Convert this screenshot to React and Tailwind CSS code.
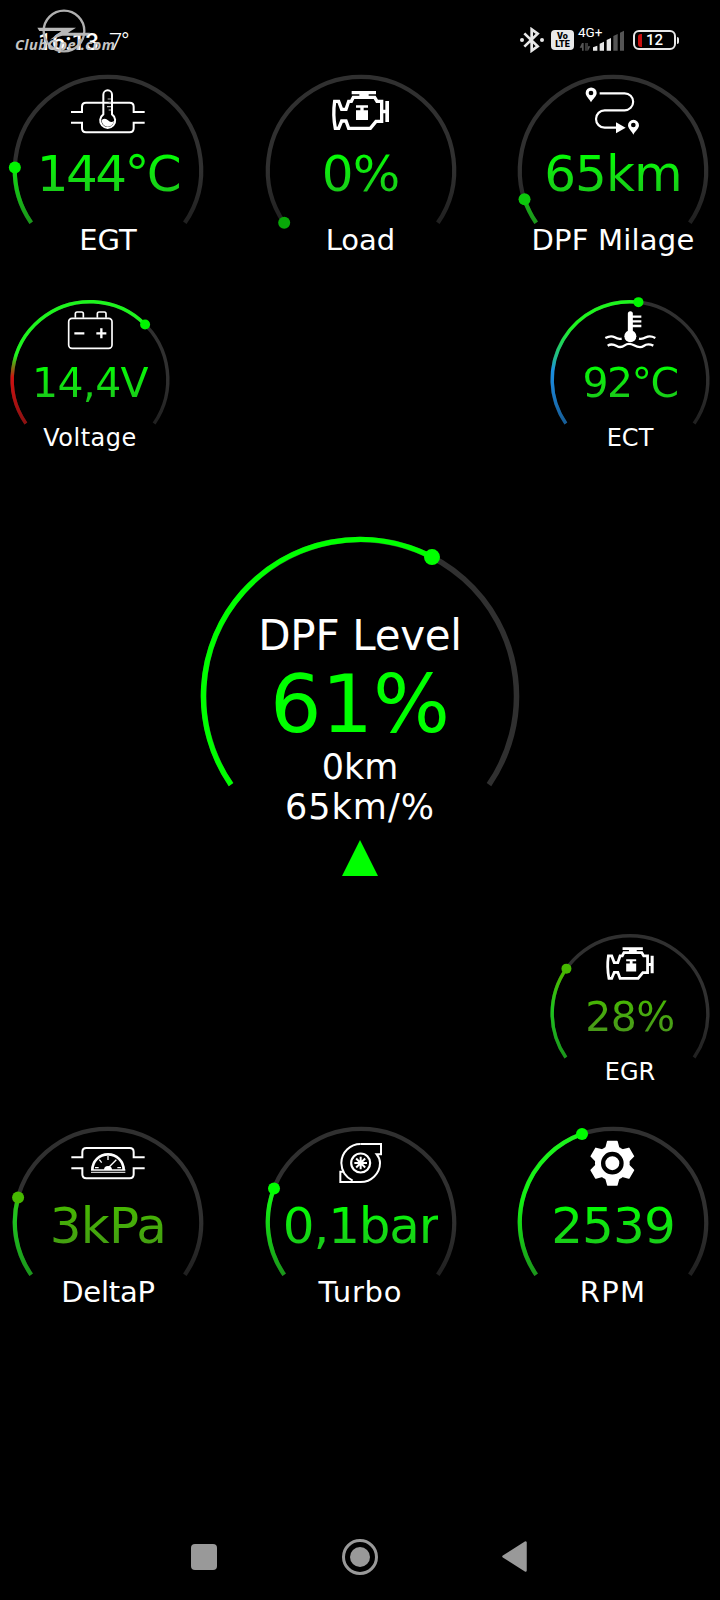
import { useId } from "react";

const START = 34.5; // degrees below the horizontal where the arc begins
const SPAN = 249;

const GREEN = [
  [0, "#1df51d"],
  [0.5, "#12f012"],
  [1, "#1a961a"],
];

const OLIVE = [
  [0, "#46b800"],
  [0.35, "#46b800"],
  [0.6, "#1fc41f"],
  [1, "#1a961a"],
];

const sizes = {
  lg: {
    box: "w-[200px] h-[190px]",
    icon: "h-[82px]",
    iconSvg: "w-[80px] h-[48px]",
    value: "text-[50px] leading-[45px]",
    label: "mt-[23px] text-[29px] leading-[40px]",
    w: 200, h: 190, cy: 100, r: 93.2, stroke: 4.2, dot: 6,
  },
  sm: {
    box: "w-[166px] h-[160px]",
    icon: "h-[68px]",
    iconSvg: "w-[66.7px] h-[40px]",
    value: "text-[41px] leading-[38px]",
    label: "mt-[20px] text-[24px] leading-[32px]",
    w: 166, h: 160, cy: 83.5, r: 77.8, stroke: 3.4, dot: 5,
  },
};

function point(cx, cy, r, deg) {
  const a = (deg * Math.PI) / 180;
  return [cx + r * Math.cos(a), cy + r * Math.sin(a)];
}

function arcPath(cx, cy, r, from, to) {
  const [x1, y1] = point(cx, cy, r, from);
  const [x2, y2] = point(cx, cy, r, to);
  const large = to - from > 180 ? 1 : 0;
  return `M${x1} ${y1}A${r} ${r} 0 ${large} 1 ${x2} ${y2}`;
}

function Arc({ w, h, cy, r, stroke, dot, pct, stops, dotColor, flat }) {
  const id = useId();
  const cx = w / 2;
  const from = 180 - START;
  const to = from + SPAN * pct;
  const [dx, dy] = point(cx, cy, r, to);

  return (
    <svg className="[grid-area:1/1]" width={w} height={h} fill="none">
      <defs>
        <linearGradient id={id} gradientUnits="userSpaceOnUse" x1="0" x2="0" y1={cy - r} y2={cy + r * 0.57}>
          {stops.map(([offset, color]) => (
            <stop key={offset} offset={offset} stopColor={color} />
          ))}
        </linearGradient>
        <linearGradient id={id + "t"} gradientUnits="userSpaceOnUse" x1="0" x2="0" y1={cy} y2={cy + r * 0.57}>
          <stop offset="0" stopColor="#303030" />
          <stop offset="1" stopColor={flat ? "#303030" : "#202020"} />
        </linearGradient>
      </defs>
      <path d={arcPath(cx, cy, r, from, from + SPAN)} stroke={`url(#${id}t)`} strokeWidth={stroke} />
      {pct > 0 && <path d={arcPath(cx, cy, r, from, to)} stroke={`url(#${id})`} strokeWidth={stroke} />}
      <circle cx={dx} cy={dy} r={dot} fill={dotColor} />
    </svg>
  );
}

function Gauge({
  size = "lg",
  icon: Icon,
  value,
  label,
  pct,
  stops = GREEN,
  dotColor = "#00f500",
  valueClass = "",
  labelClass = "",
  color = "from-[#00ff00] to-[#19c519]",
}) {
  const s = sizes[size];

  return (
    <div className={`grid ${s.box}`}>
      <Arc {...s} pct={pct} stops={stops} dotColor={dotColor} />
      <div className="[grid-area:1/1] flex flex-col items-center whitespace-nowrap">
        <div className={`flex items-center ${s.icon}`}>
          <Icon className={s.iconSvg} />
        </div>
        <div className={`bg-linear-to-b bg-clip-text text-transparent ${color} ${s.value} ${valueClass}`}>
          {value}
        </div>
        <div className={`text-white ${s.label} ${labelClass}`}>{label}</div>
      </div>
    </div>
  );
}

/* ICONS */

function EgtIcon({ className }) {
  return (
    <svg className={className} viewBox="204 261 240 144" fill="none" stroke="#fff" strokeWidth="6">
      <path d="M213 336H246V320Q246 308 258 308H389Q401 308 401 320V336H434M213 368H246V385Q246 397 258 397H389Q401 397 401 385V368H434" />
      <path d="M310 343V284A13 13 0 0 1 336 284V343A22.500 22.500 0 1 1 310 343Z" />
      <path d="M305 360Q316 352 324 361T342 363A18 18 0 0 1 305 360Z" fill="#fff" stroke="none" />
      <path d="M323 297H333M326 308H333M321 320H333M326 330H333" strokeWidth="3.500" stroke="#bbb" />
    </svg>
  );
}

function EngineIcon({ className }) {
  return (
    <svg className={className} viewBox="243 81 240 144" fill="none">
      <path
        d="M284 124H296L305 148H318L326 124H334L340 112H404L411 124H425V184H408L391 205H326L318 183H305L296 205H286Q278 165 284 124Z"
        stroke="#fff"
        strokeWidth="10"
      />
      <g fill="#fff">
        <path d="M335 93H408V103H386V110H358V103H335Z" />
        <path d="M427 149H436V123H447V186H436V160H427Z" />
        <path d="M348 136H384V143H371V151H384V180H348V151H361V143H348Z" />
      </g>
    </svg>
  );
}

function RouteIcon({ className }) {
  return (
    <svg className={className} viewBox="219 261 240 144">
      <path d="M299 280H374A25.500 25.500 0 0 1 374 331H314A26 26 0 0 0 314 383H350" fill="none" stroke="#fff" strokeWidth="6.500" />
      <path d="M348 367L377 383L348 400Z" fill="#fff" />
      <g fill="#fff" fillRule="evenodd">
        <path d="M273 307C268 296 257 289 257 279A16.500 16.500 0 0 1 290 279C290 289 279 296 273 307ZM273 272A7 7 0 1 0 273 286A7 7 0 1 0 273 272Z" />
        <path d="M400 404C395 393 384 386 384 376A16.500 16.500 0 0 1 417 376C417 386 406 393 400 404ZM400 368A7 7 0 1 0 400 382A7 7 0 1 0 400 368Z" />
      </g>
    </svg>
  );
}

function BatteryIcon({ className }) {
  return (
    <svg className={className} viewBox="170 90 200 120" fill="none" stroke="#fff">
      <rect x="205" y="115" width="130" height="90" rx="10" strokeWidth="5" />
      <path d="M225 113V101Q225 96 230 96H244Q249 96 249 101V113M291 113V101Q291 96 296 96H312Q317 96 317 101V113" strokeWidth="5" />
      <path d="M222 160H252M288 160H318M303 145V175" strokeWidth="7" />
    </svg>
  );
}

function CoolantIcon({ className }) {
  return (
    <svg className={className} viewBox="200 90 200 120" fill="none" stroke="#fff">
      <path d="M300 101V165" strokeWidth="15" strokeLinecap="round" />
      <circle cx="300" cy="169" r="18" fill="#fff" stroke="none" />
      <path d="M300 110H333M300 124H333M300 138H333" strokeWidth="7" />
      <path
        d="M225 174C238 167 245 167 253 172S266 178 274 176M326 176C334 178 340 176 347 172S362 167 375 174M232 197C243 190 252 194 259 198S275 202 283 196S300 190 311 196S332 204 340 198S356 191 369 197"
        strokeWidth="7"
      />
    </svg>
  );
}

function DeltaPIcon({ className }) {
  return (
    <svg className={className} viewBox="204 87 240 144" fill="none" stroke="#fff">
      <path d="M214 142H247V126Q247 114 259 114H389Q401 114 401 126V142H434M214 175H247V193Q247 205 259 205H389Q401 205 401 193V175H434" strokeWidth="6" />
      <path d="M277 180A47 47 0 0 1 371 180" strokeWidth="8" />
      <path d="M273 180H376" strokeWidth="4" />
      <path d="M273 187H376" strokeWidth="4" stroke="#ccc" />
      <path d="M324 138V150M298 149L305 158M285 173H296M352 173H363" strokeWidth="4" />
      <path d="M322 176L349 149" strokeWidth="4" />
      <path d="M312 180A12 12 0 0 1 336 180Z" fill="#fff" stroke="none" />
    </svg>
  );
}

function TurboIcon({ className }) {
  return (
    <svg className={className} viewBox="212 87 240 144" fill="none" stroke="#fff" strokeWidth="6">
      <path d="M331 102H392V133H379Q389 145 389 159A58 57.500 0 0 1 331 216H270V185H279" />
      <path d="M331 102A58 57.500 0 0 0 273 159Q274 195 307 212" />
      <circle cx="331" cy="159" r="28.500" strokeWidth="6.500" />
      <path d="M331 140V178M312 159H350M317.500 145.500L344.500 172.500M344.500 145.500L317.500 172.500" strokeWidth="6" />
    </svg>
  );
}

function GearIcon({ className }) {
  return (
    <svg className={className} viewBox="219 87 240 144">
      <circle cx="337" cy="159.500" r="52" fill="#fff" />
      {[0, 60, 120, 180, 240, 300].map((deg) => (
        <path
          key={deg}
          d="M315 116L321 94Q321 92 323 92H351Q353 92 353 94L359 116Z"
          fill="#fff"
          transform={`rotate(${deg} 337 159.5)`}
        />
      ))}
      <circle cx="337" cy="159.500" r="27.500" fill="#fff" stroke="#000" strokeWidth="13" />
    </svg>
  );
}

/* STATUS BAR */

function Watermark() {
  return (
    <div className="absolute left-[15px] top-[9px] w-[104px] text-[#c4c4c4]">
      <svg className="ml-[22px] w-[56px] h-[44px]" viewBox="111 27 168 132" fill="none">
        <circle cx="192" cy="93" r="61" stroke="#b0b0b0" strokeWidth="7" />
        <path d="M112 83H228L204 98H270L262 107H186L150 119L184 93H118Z" fill="#b8b8b8" />
      </svg>
      <div className="-mt-[17px] font-['Open_Sans'] text-[14.5px] leading-[18px] font-bold italic tracking-[0.45px] whitespace-nowrap">
        ClubOpel.com
      </div>
    </div>
  );
}

function StatusBar() {
  return (
    <header className="relative flex h-[70px] items-center pt-[10px] pl-[38px] pr-[41px] font-[Roboto] text-white">
      <div className="flex items-baseline pt-[4px] leading-[28px]">
        <span className="text-[24px] font-medium tracking-[0px]">16:13</span>
        <span className="ml-[10px] text-[24px] font-light tracking-[-1.5px]">7°</span>
      </div>
      <Watermark />

      <div className="ml-auto flex items-center">
        <svg className="w-[24px] h-[26px]" viewBox="58 80 72 78" fill="none" stroke="#e8e8e8" strokeWidth="8">
          <path d="M71 99L111 138L93 151V87L111 100L71 139" />
          <circle cx="64" cy="119" r="6" fill="#e8e8e8" stroke="none" />
          <circle cx="124" cy="119" r="6" fill="#e8e8e8" stroke="none" />
        </svg>

        <div className="ml-[7px] flex h-[20px] w-[23px] flex-col items-center justify-center rounded-[4px] bg-[#e8e8e8] text-[9px] leading-[8px] font-black text-black">
          <span>Vo</span>
          <span>LTE</span>
        </div>

        <div className="ml-[5px] grid h-[24px] w-[46px]">
          <span className="[grid-area:1/1] -mt-[2px] -ml-[1px] text-[13.5px] leading-[13px]">4G+</span>
          <svg className="[grid-area:1/1] w-[46px] h-[24px]" viewBox="234 83 138 72">
            <g fill="#e8e8e8">
              <path d="M276 141L289 136V151H276Z" />
              <path d="M296 130L309 124V151H296Z" />
              <path d="M317 119L330 113V151H317Z" />
            </g>
            <g fill="#555">
              <path d="M337 107L350 101V151H337Z" />
              <path d="M357 97L369 91V151H357Z" />
              <path d="M243 128H248V151H243V142H236ZM253 128H257V151H253V151ZM261 128V138H268L261 151H259V128Z" />
            </g>
          </svg>
        </div>

        <div className="ml-[8px] flex h-[20px] w-[43px] items-center rounded-[6px] border-2 border-[#e8e8e8] pl-[3px]">
          <span className="h-[13px] w-[4px] rounded-l-[3px] bg-[#c80f0f]" />
          <span className="ml-[4px] text-[15px] leading-[16px] font-medium">12</span>
        </div>
        <span className="ml-[1px] h-[7px] w-[2px] rounded-r-[2px] bg-[#e8e8e8]" />
      </div>
    </header>
  );
}

function MainGauge() {
  return (
    <section className="mx-auto mt-[76px] grid h-[344px] w-[330px]">
      <Arc
        w={330} h={344} cy={164} r={156.5} stroke={5.5} dot={8}
        pct={0.61} stops={[[0, "#00ff00"], [1, "#00ff00"]]} dotColor="#00ff00" flat
      />
      <div className="[grid-area:1/1] flex flex-col items-center pt-[79px] whitespace-nowrap text-white">
        <div className="text-[42px] leading-[50px] tracking-[-0.3px]">DPF Level</div>
        <div className="mt-[8px] text-[81px] leading-[70px] text-[#00ff00]">61%</div>
        <div className="mt-[9px] text-[35px] leading-[39px]">0km</div>
        <div className="text-[35px] leading-[40px] tracking-[1px]">65km/%</div>
        <svg className="mt-[13px] h-[36px] w-[36px]" viewBox="0 0 36 36">
          <path d="M18 0L36 36H0Z" fill="#00ff00" />
        </svg>
      </div>
    </section>
  );
}

function NavBar() {
  return (
    <nav className="mt-auto mb-[25px] flex h-[37px] items-center justify-between pl-[191px] pr-[193px]">
      <span className="h-[26px] w-[26px] rounded-[4px] bg-[#999]" />
      <span className="flex h-[36px] w-[36px] items-center justify-center rounded-full border-[3px] border-[#999]">
        <span className="h-[20px] w-[20px] rounded-full bg-[#999]" />
      </span>
      <svg className="h-[31px] w-[25px]" viewBox="0 0 25 31">
        <path d="M1.500 15.500L23.500 1.500V29.500Z" fill="#999" stroke="#999" strokeWidth="2.500" strokeLinejoin="round" />
      </svg>
    </nav>
  );
}

function App() {
  return (
    <div className="flex h-[1600px] w-[720px] flex-col overflow-hidden bg-black font-['DejaVu_Sans',sans-serif]">
      <StatusBar />

      <section className="flex justify-between pl-[8px] pr-[7px]">
        <Gauge icon={EgtIcon} value="144°C" label="EGT" pct={0.145} valueClass="tracking-[-2.6px]" />
        <Gauge icon={EngineIcon} value="0%" label="Load" pct={0} dotColor="#08a808" valueClass="tracking-[-1px]" />
        <Gauge
          icon={RouteIcon} value="65km" label="DPF Milage" pct={0.065} dotColor="#0cc80c"
          valueClass="tracking-[-0.9px]" labelClass="tracking-[0.2px]"
        />
      </section>

      <section className="mt-[36px] flex justify-between px-[7px]">
        <Gauge
          size="sm" icon={BatteryIcon} value="14,4V" label="Voltage" pct={0.681}
          stops={[[0, "#1df51d"], [0.44, "#1df51d"], [0.52, "#6a8a10"], [0.62, "#d01010"], [1, "#8c1010"]]}
          valueClass="tracking-[-0.7px]" labelClass="tracking-[0.5px]"
        />
        <Gauge
          size="sm" icon={CoolantIcon} value="92°C" label="ECT" pct={0.525}
          stops={[[0, "#1df51d"], [0.2, "#1df51d"], [0.46, "#20b890"], [0.56, "#1a90e0"], [0.7, "#1a80d0"], [1, "#155c96"]]}
          valueClass="tracking-[-1.6px]"
        />
      </section>

      <MainGauge />

      <section className="mt-[53.5px] flex justify-end px-[7px]">
        <Gauge
          size="sm" icon={EngineIcon} value="28%" label="EGR" pct={0.28}
          stops={OLIVE} dotColor="#46b800" valueClass="tracking-[-0.5px]" color="from-[#46b800] to-[#48941a]"
        />
      </section>

      <section className="mt-[32.5px] flex justify-between pl-[8px] pr-[7px]">
        <Gauge
          icon={DeltaPIcon} value="3kPa" label="DeltaP" pct={0.2} stops={OLIVE} dotColor="#46b800"
          color="from-[#46b800] to-[#439c12]" valueClass="tracking-[-0.7px]" labelClass="tracking-[-0.2px]"
        />
        <Gauge
          icon={TurboIcon} value="0,1bar" label="Turbo" pct={0.223} dotColor="#00ff00"
          valueClass="tracking-[-1.2px]" labelClass="tracking-[0.8px]"
        />
        <Gauge
          icon={GearIcon} value="2539" label="RPM" pct={0.422} dotColor="#00ff00"
          valueClass="tracking-[-0.9px]" labelClass="tracking-[1.2px]"
        />
      </section>

      <NavBar />
    </div>
  );
}

export default App;
